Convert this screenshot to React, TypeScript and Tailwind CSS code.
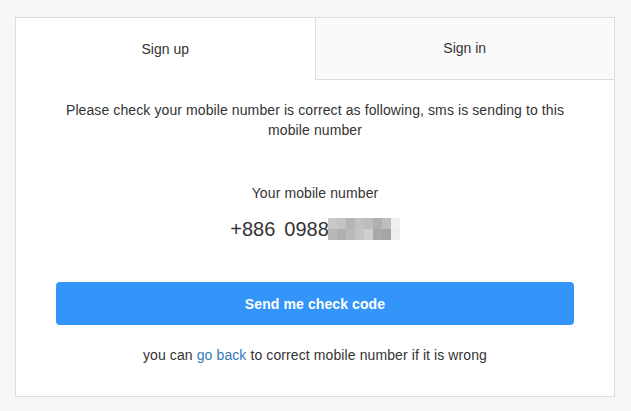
const MOSAIC = [
  ['#c9c9c9', '#c4c4c4', '#b5b5b5', '#c2c2c2', '#bdbdbd', '#b0b0b0', '#bebebe', '#f0f0f0'],
  ['#b8b8b8', '#b0b0b0', '#bababa', '#c4c4c4', '#cfcfcf', '#a9a9a9', '#a5a5a5', '#eeeeee'],
];

function Mosaic() {
  return (
    <span className="inline-flex flex-col align-middle">
      {MOSAIC.map((row, r) => (
        <span key={r} className="flex">
          {row.map((c, i) => (
            <span key={i} className="block h-[11px] w-[9px]" style={{ backgroundColor: c }} />
          ))}
        </span>
      ))}
    </span>
  );
}

export default function App() {
  return (
    <div
      className="min-h-[411px] bg-[#f7f7f7] pl-[15px] pr-[16px] pt-[17px] text-[#333]"
      style={{ fontFamily: '"Liberation Sans", Arial, sans-serif' }}
    >
      <div className="w-[600px] border border-[#ddd] bg-white">
        <div className="flex h-[62px] text-[14px]">
          <div className="flex flex-1 items-center justify-center bg-white">Sign up</div>
          <div className="flex flex-1 items-center justify-center border-b border-l border-[#ddd] bg-[#fafafa]">
            Sign in
          </div>
        </div>
        <div className="px-10 pb-[31px] pt-5 text-center text-[14px] leading-5 tracking-[0.1px]">
          <p>Please check your mobile number is correct as following, sms is sending to this mobile number</p>
          <p className="mt-[43px]">Your mobile number</p>
          <div className="mt-3 flex h-[28px] items-center justify-center text-[20px] leading-[28px] tracking-normal">
            <span>+886</span>
            <span className="ml-[9px]">0988</span>
            <span className="-ml-[1px] flex">
              <Mosaic />
            </span>
          </div>
          <button
            type="button"
            className="mt-[39px] h-[43px] w-full rounded-[4px] bg-[#3395fa] text-[14px] font-bold text-white"
          >
            Send me check code
          </button>
          <p className="mt-5">
            you can <a className="text-[#337ab7]">go back</a> to correct mobile number if it is wrong
          </p>
        </div>
      </div>
    </div>
  );
}
